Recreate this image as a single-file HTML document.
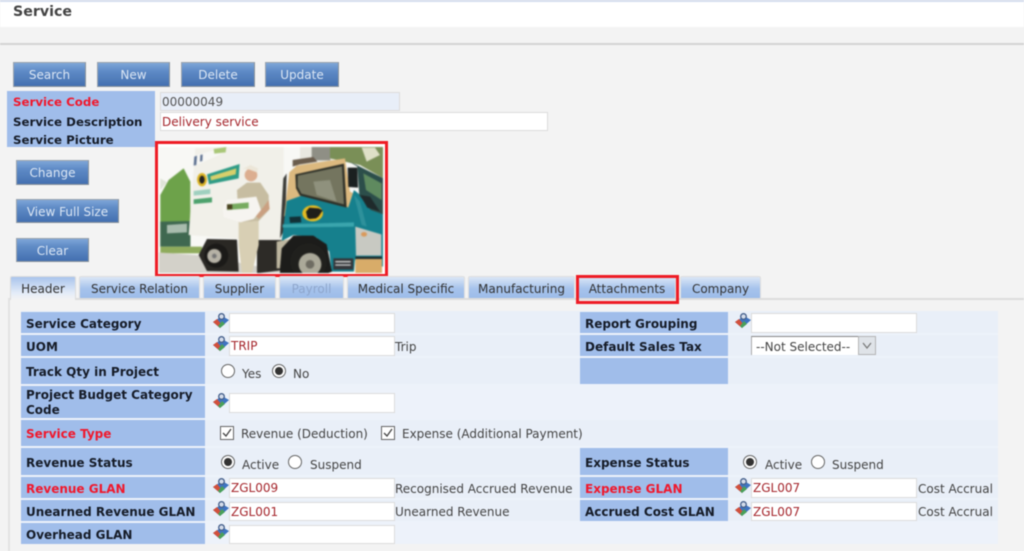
<!DOCTYPE html>
<html><head><meta charset="utf-8"><title>Service</title>
<style>
html,body{margin:0;padding:0;background:#f3f3f3}
#r{position:relative;width:1024px;height:551px;overflow:hidden;background:#f3f3f3;font-family:"DejaVu Sans","Liberation Sans",sans-serif;font-size:12px;color:#333;filter:blur(.45px)}
#r div,#r svg.a{position:absolute;box-sizing:border-box}
.b{background:linear-gradient(#7ea6d8,#5f8bc6 35%,#4470b0);border:1px solid #9aa3ad;border-right-color:#8b949c;border-bottom-color:#8b949c;color:#dbe6f4;text-align:center;font-size:12px;line-height:24px}
.l{background:#a0bdea;font-weight:bold;color:#161c28;font-size:12px;padding:3px 0 0 5px;display:flex;align-items:center;line-height:15px}
.rd{color:#f0182c}
.i{background:#fff;border:1px solid #dcdcdc;color:#a5262c;font-size:12px;padding-left:1px;line-height:19px;height:20px;width:166px}
.t{background:linear-gradient(#dbe6f6,#a6c3ec 55%,#9dbce9);border:1px solid #dfdfdf;border-bottom:none;border-radius:2px 2px 0 0;text-align:center;font-size:12px;color:#333;top:276px;height:22px;line-height:25px}
.tx{font-size:12px;color:#444;white-space:nowrap;line-height:14px}
.rad{width:14px;height:14px;border-radius:50%;border:1px solid #666;background:#fff}
.rad.on::after{content:"";position:absolute;left:2px;top:2px;width:8px;height:8px;border-radius:50%;background:#333}
.c{width:14px;height:14px;border:1px solid #666;background:#fff}
.rw{background:#e9eff8;left:21px;width:977px}
</style></head><body>
<div id="r">
<div style="left:0;top:0;width:1024px;height:2px;background:#d6deee"></div>
<div style="left:0;top:2px;width:1024px;height:25px;background:#fff"></div>
<div style="left:0;top:43px;width:1024px;height:2px;background:#d4d4d4"></div>
<div style="left:13px;top:4px;font-size:14.2px;font-weight:bold;color:#444;line-height:17px">Service</div>

<div class="b" style="left:13px;top:62px;width:73px;height:25px">Search</div>
<div class="b" style="left:97px;top:62px;width:73px;height:25px">New</div>
<div class="b" style="left:181px;top:62px;width:74px;height:25px">Delete</div>
<div class="b" style="left:265px;top:62px;width:74px;height:25px">Update</div>

<div style="left:7px;top:91px;width:148px;height:56px;background:#a0bdea"></div>
<div class="tx" style="left:13px;top:95px;font-weight:bold;font-size:11.8px;color:#f0182c">Service Code</div>
<div class="tx" style="left:13px;top:115px;font-weight:bold;color:#161c28;font-size:11.8px">Service Description</div>
<div class="tx" style="left:13px;top:133px;font-weight:bold;color:#161c28;font-size:11.8px">Service Picture</div>
<div class="i" style="left:160px;top:92px;width:240px;height:19px;background:#e8eef8;color:#555;line-height:18px">00000049</div>
<div class="i" style="left:160px;top:112px;width:388px;height:19px;line-height:18px">Delivery service</div>

<div class="b" style="left:16px;top:160px;width:73px;height:25px">Change</div>
<div class="b" style="left:16px;top:199px;width:103px;height:24px">View Full Size</div>
<div class="b" style="left:16px;top:238px;width:73px;height:24px">Clear</div>

<div style="left:155px;top:141px;width:233px;height:136px;border:3px solid #ee1c25;background:#fff"></div>
<svg class="a" style="left:159px;top:147px;filter:blur(.6px)" width="224" height="126" viewBox="0 0 224 126">
<rect width="224" height="126" fill="#f8f8f5"/>
<g transform="translate(-2,-2) scale(.3333)">
<path d="M10 150 L35 105 L80 70 L100 110 L100 305 L10 305Z" fill="#6da24a"/>
<path d="M10 100 L30 112 L10 135Z" fill="#dfe4d8"/>
<path d="M10 230 L100 228 L100 305 L10 305Z" fill="#3f6850"/>
<path d="M30 240 L90 236 L90 262 L30 265Z" fill="#a9bcae"/>
<rect x="10" y="305" width="125" height="20" fill="#8fab5c"/>
<path d="M0 322 L140 332 L380 380 L380 400 L0 400Z" fill="#d3d1c9"/>
<path d="M95 270 L115 10 L210 4 L380 0 L380 285 L300 285Z" fill="#f1f0e9"/>
<path d="M112 32 L205 6 L208 20 L115 62Z" fill="#f7f7f4"/>
<path d="M112 35 L120 32 L118 60 L110 62Z M130 30 L137 28 L136 48 L129 50Z" fill="#5b6f8f"/>
<path d="M170 12 L208 6 L206 22 L172 26Z" fill="#a9c777"/>
<path d="M150 88 L248 57 L245 100 L156 118Z" fill="#2f9c86"/>
<path d="M160 94 L238 70 L236 88 L162 106Z" fill="#d7cf6b"/>
<ellipse cx="135" cy="104" rx="15" ry="20" fill="#dcb424"/><ellipse cx="135" cy="104" rx="8" ry="12" fill="#222"/>
<path d="M110 138 L160 132 L160 147 L110 152Z" fill="#9fd0bf"/>
<path d="M110 163 L165 157 L165 172 L110 177Z" fill="#4da26d"/>
<path d="M125 330 L150 282 L240 284 L245 380 L150 378Z" fill="#2a2824"/>
<circle cx="178" cy="332" r="36" fill="#1b1a18"/><circle cx="172" cy="333" r="21" fill="#b6b2a6"/><circle cx="172" cy="333" r="7" fill="#777"/>
<path d="M300 285 L380 285 L380 375 L300 385Z" fill="#2d2b27"/>
<path d="M245 232 L305 228 L305 300 L285 385 L255 385 L245 300Z" fill="#d8cfb4"/>
<path d="M240 135 L270 113 L310 113 L335 150 L336 195 L305 228 L245 232Z" fill="#c7bda1"/>
<path d="M335 165 L338 192 L305 222 L296 212 L318 188Z" fill="#caa081"/>
<circle cx="282" cy="90" r="19" fill="#dcae90"/>
<path d="M257 72 L280 60 L303 70 L300 82 L272 72Z" fill="#ece6d8"/>
<path d="M197 192 L208 165 L298 155 L312 195 L290 222 L250 232 L200 216Z" fill="#f6f4f0"/>
<path d="M210 178 L275 172 L275 190 L210 195Z" fill="#77ab60"/>
<rect x="210" y="178" width="16" height="15" fill="#4a4320"/>
</g>
<g transform="translate(121,-2) scale(.3333)">
<rect x="60" y="0" width="100" height="60" fill="#e9e8e0"/>
<rect x="95" y="6" width="56" height="40" fill="#8f8f85"/>
<path d="M150 4 L310 4 L310 100 L240 60 L150 40Z" fill="#7a8f57"/>
<path d="M245 8 L285 8 L300 30 L260 50Z" fill="#dfe0c8"/>
<path d="M38 65 L38 45 L100 36 L112 50 L60 58Z" fill="#6a5c4c"/>
<path d="M10 100 L20 85 L15 250 L0 280Z" fill="#3a3a36"/>
<path d="M12 215 L28 82 L50 62 L195 40 L210 140 L240 155 L205 190 L60 170Z" fill="#dcb97f"/>
<path d="M8 265 L20 168 L70 150 L205 187 L222 135 L310 205 L310 365 L225 345 L222 380 L155 380 L148 320 L110 278 L40 270 L5 288Z" fill="#16808d"/>
<path d="M8 238 L222 232 L222 245 L8 248Z" fill="#3aa5ad"/>
<path d="M222 150 L245 240 L260 245 L240 170Z" fill="#3f9ca5" opacity=".6"/>
<path d="M205 48 L310 100 L310 208 L272 195 L238 152 L232 65Z" fill="#2c4e4a"/>
<path d="M250 85 L305 115 L305 165 L258 135Z" fill="#5f8a5f"/>
<path d="M46 88 L192 56 L200 188 L60 152 L48 130Z" fill="#2e3028"/>
<path d="M53 92 L186 64 L192 178 L64 146 L53 125Z" fill="#74755f"/>
<path d="M100 110 L150 105 L170 170 L110 150Z" fill="#8f917d"/>
<path d="M203 68 L232 68 L234 128 L205 126Z" fill="#1b2020"/>
<path d="M240 150 L270 155 L300 200 L262 188Z" fill="#1f2a2b"/>
<ellipse cx="98" cy="205" rx="31" ry="24" fill="#e5bb22"/>
<path d="M78 200 L88 188 L116 190 L128 196 L116 214 L108 220 L88 222 L82 218Z" fill="#1e1e1a"/>
<path d="M28 216 L62 214 L64 232 L30 234Z" fill="#123036"/>
<path d="M226 245 L304 268 L304 332 L228 332Z" fill="#c8c9c2"/>
<ellipse cx="252" cy="268" rx="9" ry="7" fill="#d99a5d"/>
<path d="M226 335 L306 335 L306 342 L226 342Z" fill="#1d2a2c"/>
<path d="M226 342 L306 342 L306 386 L226 386Z" fill="#d8ac69"/>
<rect x="160" y="340" width="60" height="34" fill="#34363a"/>
<path d="M166 348 L212 348 L212 352 L166 352Z M166 358 L212 358 L212 362 L166 362Z" fill="#d9dbda"/>
<path d="M-10 290 L30 282 L5 330 L0 370 L-10 370Z" fill="#bdb69f"/>
<path d="M0 370 L5 310 L40 272 L100 272 L140 298 L156 380 L140 386 L0 386Z" fill="#1c1c1a"/>
<circle cx="86" cy="350" r="55" fill="#20201d"/>
<circle cx="90" cy="358" r="34" fill="#aba999"/><circle cx="90" cy="358" r="13" fill="#6e6c62"/>
</g>
</svg>

<!-- tabs -->
<div style="left:8px;top:298px;width:1016px;height:2px;background:#dcdcdc"></div>
<div style="left:8px;top:298px;width:2px;height:253px;background:#e2e2e2"></div>
<div class="t" style="left:10px;width:66px;height:24px;background:linear-gradient(#a9c4ec,#e4ecf8 70%,#f3f3f3);border-color:#dcdcdc">Header</div>
<div class="t" style="left:79px;width:121px">Service Relation</div>
<div class="t" style="left:203px;width:73px">Supplier</div>
<div class="t" style="left:279px;width:65px;color:#8ea6cc">Payroll</div>
<div class="t" style="left:347px;width:118px">Medical Specific</div>
<div class="t" style="left:468px;width:107px">Manufacturing</div>
<div class="t" style="left:578px;width:98px">Attachments</div>
<div class="t" style="left:680px;width:81px">Company</div>
<div style="left:576px;top:275px;width:103px;height:29px;border:3px solid #ee1c25"></div>

<!-- table bg -->
<div style="left:21px;top:311px;width:977px;height:233px;background:#edf2fa"></div>
<div class="rw" style="top:311px;height:22px"></div>
<div class="rw" style="top:335px;height:21px"></div>
<div class="rw" style="top:358px;height:26px"></div>
<div class="rw" style="top:420px;height:26px"></div>
<div class="rw" style="top:448px;height:27px"></div>
<div class="rw" style="top:477px;height:21px"></div>
<div class="rw" style="top:500px;height:21px"></div>

<div class="l" style="left:21px;top:312px;width:184px;height:21px">Service Category</div>
<div class="l" style="left:21px;top:335px;width:184px;height:21px">UOM</div>
<div class="l" style="left:21px;top:358px;width:184px;height:26px">Track Qty in Project</div>
<div class="l" style="left:21px;top:386px;width:184px;height:32px;padding-top:1px">Project Budget Category Code</div>
<div class="l rd" style="left:21px;top:420px;width:184px;height:26px">Service Type</div>
<div class="l" style="left:21px;top:448px;width:184px;height:27px">Revenue Status</div>
<div class="l rd" style="left:21px;top:477px;width:184px;height:21px">Revenue GLAN</div>
<div class="l" style="left:21px;top:500px;width:184px;height:21px">Unearned Revenue GLAN</div>
<div class="l" style="left:21px;top:523px;width:184px;height:21px;padding-top:4px">Overhead GLAN</div>

<div class="l" style="left:580px;top:312px;width:148px;height:21px">Report Grouping</div>
<div class="l" style="left:580px;top:335px;width:148px;height:21px">Default Sales Tax</div>
<div class="l" style="left:580px;top:358px;width:148px;height:26px"></div>
<div class="l" style="left:580px;top:448px;width:148px;height:27px">Expense Status</div>
<div class="l rd" style="left:580px;top:477px;width:148px;height:21px">Expense GLAN</div>
<div class="l" style="left:580px;top:500px;width:148px;height:21px">Accrued Cost GLAN</div>

<svg width="0" height="0" style="position:absolute"><defs><g id="ic"><path d="M0 9 L9 3 L16 7 L7 15Z" fill="#3f74c0"/><path d="M0 9 L4 6 L9 12 L7 15 Z" fill="#d2503c"/><path d="M5 13 L7 15 L12 11 L9 8Z" fill="#4aa05a"/><circle cx="8.500" cy="3.500" r="2.800" fill="#d4dcea" stroke="#47618c" stroke-width="1.300"/></g></defs></svg>
<svg class="a" style="left:213px;top:313px" width="16" height="16"><use href="#ic"/></svg>
<svg class="a" style="left:213px;top:336px" width="16" height="16"><use href="#ic"/></svg>
<svg class="a" style="left:213px;top:393px" width="16" height="16"><use href="#ic"/></svg>
<svg class="a" style="left:213px;top:478px" width="16" height="16"><use href="#ic"/></svg>
<svg class="a" style="left:213px;top:501px" width="16" height="16"><use href="#ic"/></svg>
<svg class="a" style="left:213px;top:524px" width="16" height="16"><use href="#ic"/></svg>
<svg class="a" style="left:735px;top:313px" width="16" height="16"><use href="#ic"/></svg>
<svg class="a" style="left:735px;top:478px" width="16" height="16"><use href="#ic"/></svg>
<svg class="a" style="left:735px;top:501px" width="16" height="16"><use href="#ic"/></svg>

<div class="i" style="left:229px;top:313px"></div>
<div class="i" style="left:229px;top:336px">TRIP</div>
<div class="i" style="left:229px;top:393px"></div>
<div class="i" style="left:229px;top:478px">ZGL009</div>
<div class="i" style="left:229px;top:502px;height:19px;line-height:18px">ZGL001</div>
<div class="i" style="left:229px;top:525px;height:19px"></div>
<div class="i" style="left:751px;top:313px"></div>
<div class="i" style="left:751px;top:478px">ZGL007</div>
<div class="i" style="left:751px;top:502px;height:19px;line-height:18px">ZGL007</div>

<div class="tx" style="left:395px;top:340px">Trip</div>
<div class="tx" style="left:395px;top:482px">Recognised Accrued Revenue</div>
<div class="tx" style="left:395px;top:505px">Unearned Revenue</div>
<div class="tx" style="left:918px;top:482px">Cost Accrual</div>
<div class="tx" style="left:918px;top:505px">Cost Accrual</div>

<div style="left:751px;top:336px;width:125px;height:19px;background:#fff;border-top:1px solid #888;border-left:1px solid #aaa"></div>
<div class="tx" style="left:756px;top:340px">--Not Selected--</div>
<div style="left:858px;top:336px;width:18px;height:19px;background:#dfe3e8;border:1px solid #b5b5b5"></div>
<svg class="a" style="left:862px;top:342px" width="10" height="8"><path d="M1 1 L5 6 L9 1" fill="none" stroke="#777" stroke-width="1.200"/></svg>

<div class="rad" style="left:221px;top:364px"></div><div class="tx" style="left:242px;top:367px">Yes</div>
<div class="rad on" style="left:272px;top:364px"></div><div class="tx" style="left:293px;top:367px">No</div>
<div class="c" style="left:220px;top:426px"></div>
<svg class="a" style="left:221px;top:427px" width="12" height="12"><path d="M2 6 L5 9 L10 2" fill="none" stroke="#444" stroke-width="1.300"/></svg>
<div class="tx" style="left:241px;top:427px">Revenue (Deduction)</div>
<div class="c" style="left:381px;top:426px"></div>
<svg class="a" style="left:382px;top:427px" width="12" height="12"><path d="M2 6 L5 9 L10 2" fill="none" stroke="#444" stroke-width="1.300"/></svg>
<div class="tx" style="left:402px;top:427px">Expense (Additional Payment)</div>
<div class="rad on" style="left:221px;top:455px"></div><div class="tx" style="left:242px;top:458px">Active</div>
<div class="rad" style="left:288px;top:455px"></div><div class="tx" style="left:310px;top:458px">Suspend</div>
<div class="rad on" style="left:743px;top:455px"></div><div class="tx" style="left:765px;top:458px">Active</div>
<div class="rad" style="left:811px;top:455px"></div><div class="tx" style="left:832px;top:458px">Suspend</div>
</div>
</body></html>
